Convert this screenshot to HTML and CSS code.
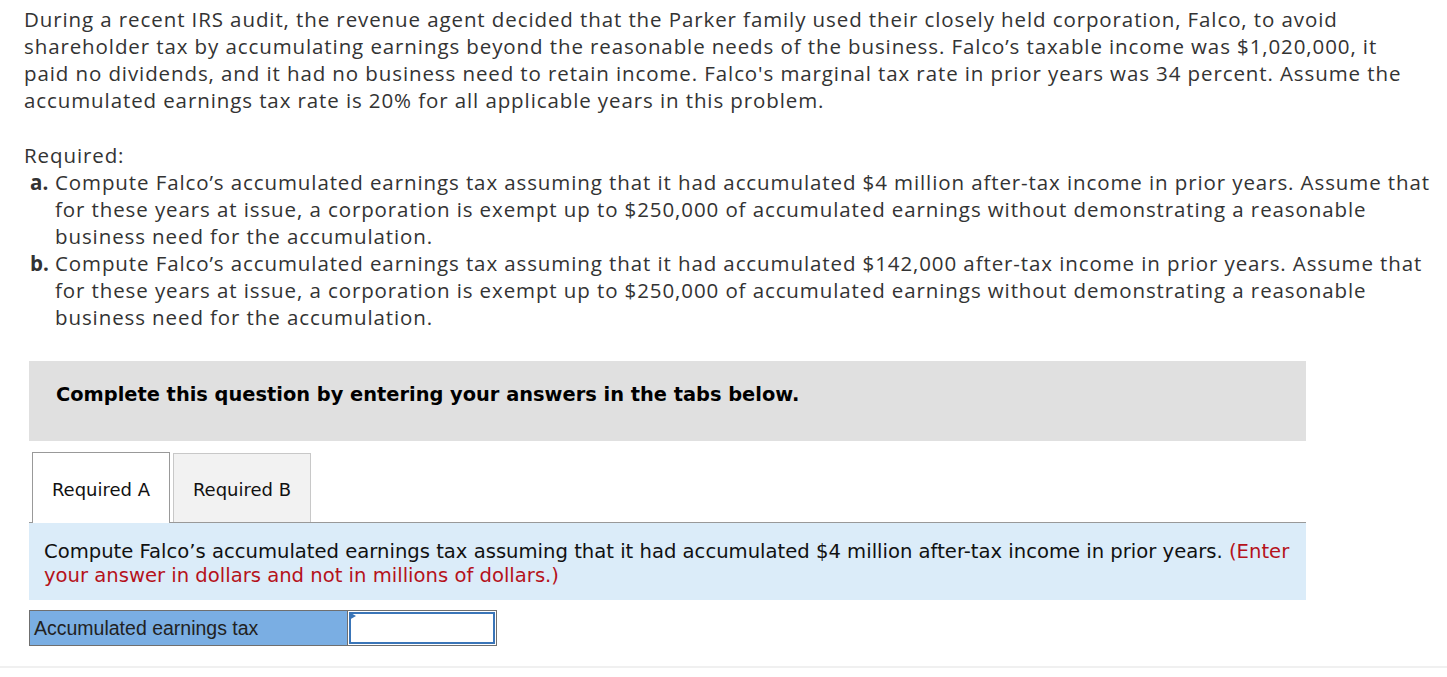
FILE: index.html
```html
<!DOCTYPE html>
<html lang="en">
<head>
    <meta charset="UTF-8">
    <title>Accumulated earnings tax</title>
    <link rel="stylesheet" href="styles.css">
</head>
<body>
    <div class="question">
        <p class="intro">During a recent IRS audit, the revenue agent decided that the Parker family used their closely held corporation, Falco, to avoid<br>shareholder tax by accumulating earnings beyond the reasonable needs of the business. Falco’s taxable income was $1,020,000, it<br>paid no dividends, and it had no business need to retain income. Falco's marginal tax rate in prior years was 34 percent. Assume the<br>accumulated earnings tax rate is 20% for all applicable years in this problem.</p>

        <div class="required">
            <div>Required:</div>
            <div class="req-item">
                <b class="req-letter">a.</b>
                <span>Compute Falco’s accumulated earnings tax assuming that it had accumulated $4 million after-tax income in prior years. Assume that<br>for these years at issue, a corporation is exempt up to $250,000 of accumulated earnings without demonstrating a reasonable<br>business need for the accumulation.</span>
            </div>
            <div class="req-item">
                <b class="req-letter">b.</b>
                <span>Compute Falco’s accumulated earnings tax assuming that it had accumulated $142,000 after-tax income in prior years. Assume that<br>for these years at issue, a corporation is exempt up to $250,000 of accumulated earnings without demonstrating a reasonable<br>business need for the accumulation.</span>
            </div>
        </div>
    </div>

    <div class="work">
        <div class="instructions">Complete this question by entering your answers in the tabs below.</div>

        <div class="tabs">
            <div class="tab active">Required A</div>
            <div class="tab">Required B</div>
        </div>

        <div class="tab-prompt">
            Compute Falco’s accumulated earnings tax assuming that it had accumulated $4 million after-tax income in prior years. <span class="hint">(Enter<br>your answer in dollars and not in millions of dollars.)</span>
        </div>

        <div class="answer-row">
            <div class="answer-label">Accumulated earnings tax</div>
            <div class="answer-cell"><input type="text" class="answer-input"></div>
        </div>
    </div>

    <div class="bottom-rule"></div>
</body>
</html>
```

FILE: styles.css
```css
body {
    margin: 0;
    background-color: #fff;
    color: #333;
}
.question {
    font-family: "Open Sans", "Liberation Sans", sans-serif;
    font-size: 20.5px;
    letter-spacing: 0.9px;
    line-height: 27px;
    padding: 6px 0 0 24px;
    white-space: nowrap;
}
.intro {
    margin: 0;
}
.required {
    margin-top: 28px;
}
.req-item {
    display: flex;
    margin-left: 6px;
}
.req-letter {
    width: 25px;
    flex-shrink: 0;
    letter-spacing: 0;
}
.work {
    margin: 30px 0 0 29px;
    width: 1277px;
    font-family: "DejaVu Sans", Verdana, sans-serif;
}
.instructions {
    background-color: #e0e0e0;
    height: 80px;
    line-height: 68px;
    padding-left: 27px;
    font-size: 19.4px;
    font-weight: bold;
    color: #000;
    box-sizing: border-box;
}
.tabs {
    display: flex;
    gap: 3px;
    margin-top: 11px;
    padding-left: 3px;
    border-bottom: 1px solid #999;
    align-items: flex-end;
}
.tab {
    width: 138px;
    height: 69px;
    line-height: 71px;
    text-align: center;
    font-size: 18px;
    color: #111;
    background-color: #f2f2f2;
    border: 1px solid #c8c8c8;
    border-bottom: none;
    box-sizing: border-box;
}
.tab.active {
    height: 71px;
    margin-bottom: -1px;
    line-height: 73px;
    background-color: #fff;
    border-color: #999;
}
.tab-prompt {
    background-color: #dbecf9;
    padding: 17px 15px 12px;
    font-size: 19.6px;
    line-height: 24px;
    color: #111;
}
.hint {
    color: #b5121b;
}
.answer-row {
    display: flex;
    margin-top: 10px;
    width: 468px;
    height: 36px;
    border: 1px solid #6f6f6f;
    box-sizing: border-box;
}
.answer-label {
    width: 318px;
    background-color: #7aaee3;
    border-right: 1px solid #6f6f6f;
    font-family: "Liberation Sans", Arial, sans-serif;
    font-size: 19.5px;
    line-height: 34px;
    padding-left: 4px;
    color: #222;
    box-sizing: border-box;
}
.answer-cell {
    flex: 1;
    position: relative;
    padding: 1px;
}
.answer-cell::before {
    content: "";
    position: absolute;
    left: 1px;
    top: 1px;
    border-left: 7px solid #3a75b8;
    border-top: 4px solid transparent;
    border-bottom: 4px solid transparent;
}
.answer-input {
    width: 100%;
    height: 100%;
    box-sizing: border-box;
    border: 2px solid #3a75b8;
    margin: 0;
    padding: 0 6px;
    outline: none;
}
.bottom-rule {
    margin-top: 20px;
    border-top: 2px solid #f0f0f0;
}
```
